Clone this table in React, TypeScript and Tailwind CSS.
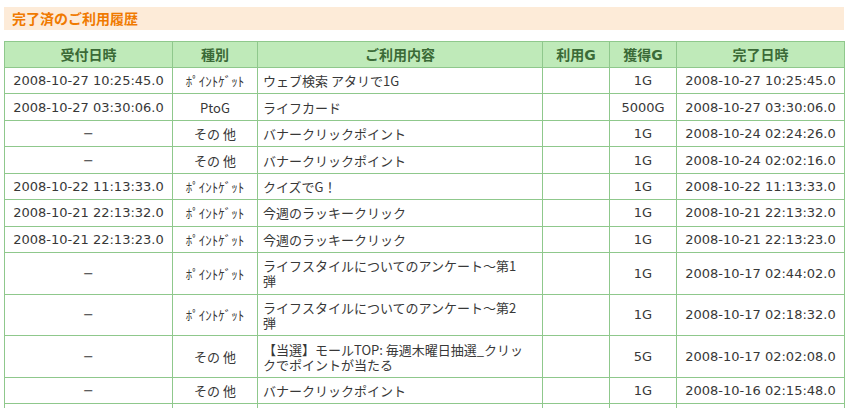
import React from "react";

type Row = {
  a: string;
  k: string;
  c: React.ReactNode;
  u: string;
  g: string;
  d: string;
  two?: boolean;
};

const P = "ﾎﾟｲﾝﾄｹﾞｯﾄ";
const D = "−";

const rows: Row[] = [
  { a: "2008-10-27 10:25:45.0", k: P, c: "ウェブ検索 アタリで1G", u: "", g: "1G", d: "2008-10-27 10:25:45.0" },
  { a: "2008-10-27 03:30:06.0", k: "PtoG", c: "ライフカード", u: "", g: "5000G", d: "2008-10-27 03:30:06.0" },
  { a: D, k: "その 他", c: "バナークリックポイント", u: "", g: "1G", d: "2008-10-24 02:24:26.0" },
  { a: D, k: "その 他", c: "バナークリックポイント", u: "", g: "1G", d: "2008-10-24 02:02:16.0" },
  { a: "2008-10-22 11:13:33.0", k: P, c: "クイズでG！", u: "", g: "1G", d: "2008-10-22 11:13:33.0" },
  { a: "2008-10-21 22:13:32.0", k: P, c: "今週のラッキークリック", u: "", g: "1G", d: "2008-10-21 22:13:32.0" },
  { a: "2008-10-21 22:13:23.0", k: P, c: "今週のラッキークリック", u: "", g: "1G", d: "2008-10-21 22:13:23.0" },
  {
    a: D,
    k: P,
    c: (
      <>
        ライフスタイルについてのアンケート～第1
        <br />弾
      </>
    ),
    u: "",
    g: "1G",
    d: "2008-10-17 02:44:02.0",
    two: true,
  },
  {
    a: D,
    k: P,
    c: (
      <>
        ライフスタイルについてのアンケート～第2
        <br />弾
      </>
    ),
    u: "",
    g: "1G",
    d: "2008-10-17 02:18:32.0",
    two: true,
  },
  {
    a: D,
    k: "その 他",
    c: (
      <>
        【当選】モールTOP: 毎週木曜日抽選_クリッ
        <br />クでポイントが当たる
      </>
    ),
    u: "",
    g: "5G",
    d: "2008-10-17 02:02:08.0",
    two: true,
  },
  { a: D, k: "その 他", c: "バナークリックポイント", u: "", g: "1G", d: "2008-10-16 02:15:48.0" },
  { a: D, k: "その 他", c: "バナークリックポイント", u: "", g: "1G", d: "2008-10-15 02:10:11.0" },
];

const td = "border border-[#8fc88c] px-[4px] py-0 leading-[15px] align-middle";
const th =
  "border border-[#8fc88c] bg-[#bfeab9] px-[4px] py-0 leading-[15px] text-[14px] font-bold text-[#3b6a37] text-center";
const jp = { fontFamily: '"Noto Sans CJK JP", sans-serif' };

export default function App() {
  return (
    <div
      className="w-[849px] h-[408px] overflow-hidden bg-white px-[4px] pt-[7px]"
      style={{ fontFamily: '"DejaVu Sans", "Noto Sans CJK JP", sans-serif' }}
    >
      <div className="w-[840px] h-[23px] bg-[#fdebd8] pl-[8px] flex items-center">
        <span className="text-[14px] font-bold text-[#f07a00]" style={jp}>
          完了済のご利用履歴
        </span>
      </div>
      <table className="mt-[11px] w-[840px] table-fixed border-collapse text-[13px] text-[#383838]">
        <colgroup>
          <col className="w-[168px]" />
          <col className="w-[85px]" />
          <col className="w-[285px]" />
          <col className="w-[67px]" />
          <col className="w-[67px]" />
          <col className="w-[168px]" />
        </colgroup>
        <thead>
          <tr className="h-[26px]">
            <th className={th} style={jp}>受付日時</th>
            <th className={th} style={jp}>種別</th>
            <th className={th} style={jp}>ご利用内容</th>
            <th className={th}>
              <span style={jp}>利用</span>G
            </th>
            <th className={th}>
              <span style={jp}>獲得</span>G
            </th>
            <th className={th} style={jp}>完了日時</th>
          </tr>
        </thead>
        <tbody>
          {rows.map((r, i) => (
            <tr key={i} className={r.two ? "h-[41.6px]" : "h-[26.45px]"}>
              <td className={`${td} text-center whitespace-nowrap`}>{r.a}</td>
              <td className={`${td} text-center whitespace-nowrap`} style={jp}>
                {r.k}
              </td>
              <td className={`${td} text-left pl-[5px] whitespace-nowrap`} style={jp}>
                {r.c}
              </td>
              <td className={`${td} text-right`}>{r.u}</td>
              <td className={`${td} text-center`}>{r.g}</td>
              <td className={`${td} text-center whitespace-nowrap`}>{r.d}</td>
            </tr>
          ))}
        </tbody>
      </table>
    </div>
  );
}
